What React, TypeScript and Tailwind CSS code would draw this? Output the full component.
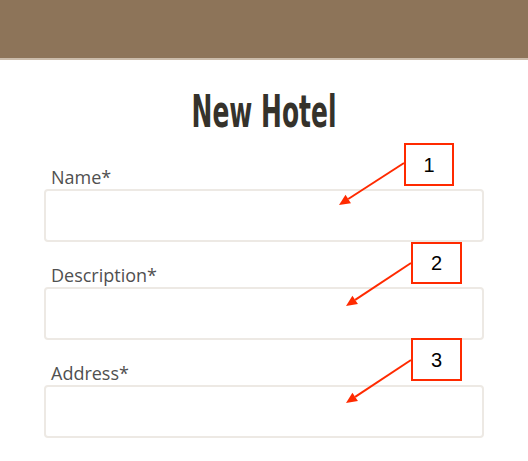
import React from 'react';

const fields = ['Name*', 'Description*', 'Address*'];

// red callouts drawn over the form
const callouts = [
  { n: '1', box: 'left-[404px] top-[143px] w-[50px] h-[43px]', from: [404, 163], to: [339, 205] },
  { n: '2', box: 'left-[411px] top-[242px] w-[51px] h-[42px]', from: [411, 263], to: [346, 306] },
  { n: '3', box: 'left-[411px] top-[338px] w-[51px] h-[43px]', from: [411, 360], to: [346, 403] },
];

function Arrow({ from, to }: { from: number[]; to: number[] }) {
  const dx = to[0] - from[0];
  const dy = to[1] - from[1];
  const len = Math.hypot(dx, dy);
  const ux = dx / len;
  const uy = dy / len;
  const hl = 11;
  const hw = 5;
  const bx = to[0] - ux * hl;
  const by = to[1] - uy * hl;
  const head = `${to[0]},${to[1]} ${bx - uy * hw},${by + ux * hw} ${bx + uy * hw},${by - ux * hw}`;
  return (
    <g>
      <line x1={from[0]} y1={from[1]} x2={bx} y2={by} stroke="#ff2a00" strokeWidth={2} />
      <polygon points={head} fill="#ff2a00" />
    </g>
  );
}

export default function App() {
  return (
    <div className="relative w-[528px] h-[461px] overflow-hidden bg-white">
      <header className="h-[60px] bg-[#8d7459] border-b-2 border-[#cbbcab]" />

      <main className="mx-auto w-[440px] pt-[30px]">
        <h1 className="text-center leading-none h-[44px] overflow-visible">
          <span
            className="inline-block scale-x-[0.63] text-[44px] font-bold text-[#35322b]"
            style={{ fontFamily: '"Liberation Sans Narrow", "DejaVu Sans Condensed", sans-serif' }}
          >
            New Hotel
          </span>
        </h1>

        <form className="mt-[29px] flex flex-col gap-[19px]">
          {fields.map((f) => (
            <div key={f} className="flex flex-col">
              <label
                className="h-[26px] pt-[2px] pl-[7px] text-[18px] leading-[24px] font-normal text-[#505050]"
                style={{ fontFamily: '"Open Sans", sans-serif' }}
              >
                {f}
              </label>
              <input
                type="text"
                className="h-[53px] w-full rounded-[4px] border-2 border-[#ede9e4] bg-white outline-none"
              />
            </div>
          ))}
        </form>
      </main>

      <svg className="absolute inset-0 pointer-events-none" width={528} height={461}>
        {callouts.map((c) => (
          <Arrow key={c.n} from={c.from} to={c.to} />
        ))}
      </svg>

      {callouts.map((c) => (
        <div
          key={c.n}
          className={`absolute ${c.box} flex items-center justify-center border-2 border-[#ff2a00] bg-white text-[20px] text-black`}
          style={{ fontFamily: '"Liberation Sans", Arial, sans-serif' }}
        >
          {c.n}
        </div>
      ))}
    </div>
  );
}
